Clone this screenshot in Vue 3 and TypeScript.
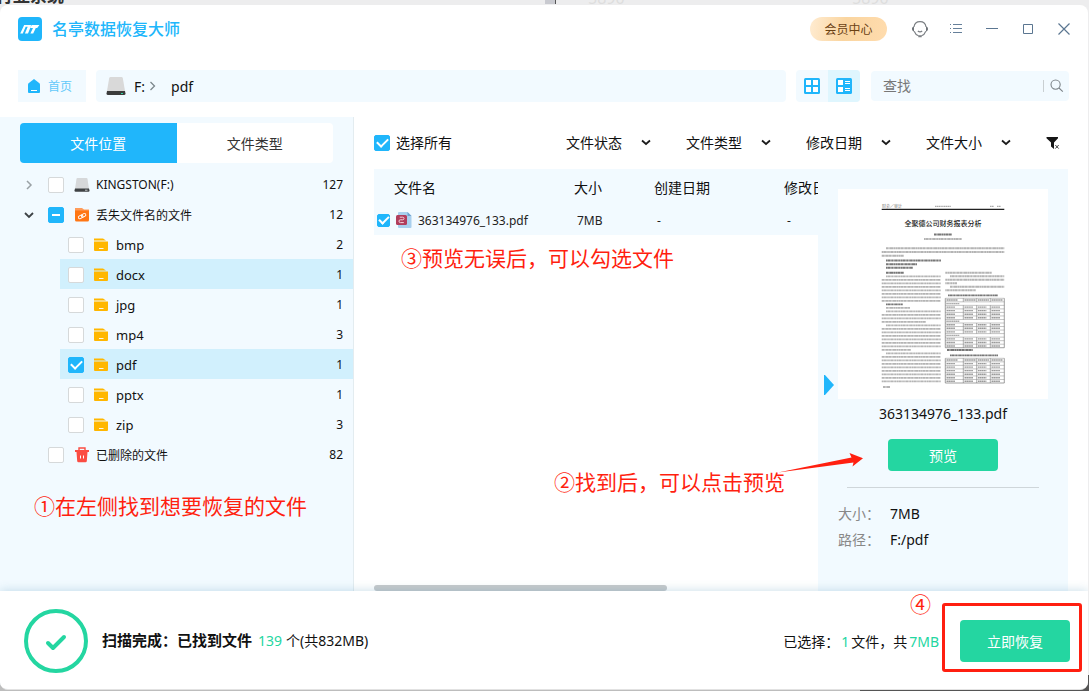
<script setup lang="ts">
import { ref } from 'vue'

interface TreeNode {
  name: string
  count: number
  checked: boolean
  highlighted?: boolean
}

const folders = ref<TreeNode[]>([
  { name: 'bmp', count: 2, checked: false },
  { name: 'docx', count: 1, checked: false, highlighted: true },
  { name: 'jpg', count: 1, checked: false },
  { name: 'mp4', count: 3, checked: false },
  { name: 'pdf', count: 1, checked: true, highlighted: true },
  { name: 'pptx', count: 1, checked: false },
  { name: 'zip', count: 3, checked: false },
])

const filters: string[] = ['文件状态', '文件类型', '修改日期', '文件大小']
const selectAll = ref(true)
const fileChecked = ref(true)
const driveChecked = ref(false)
const deletedChecked = ref(false)
const query = ref('')

interface Line {
  x1: number
  x2: number
  y: number
  strong?: boolean
}

const colLeft = 43.7
const colMid = 102.7
const colRight = 107.3
const colEnd = 166.3

const textLines: Line[] = [
  { x1: 96, x2: 114, y: 45.5, strong: true },
  { x1: 86, x2: 124, y: 50 },
  { x1: 48, x2: colEnd, y: 59.3 },
  { x1: colLeft, x2: colEnd, y: 63 },
  { x1: colLeft, x2: 66, y: 66.7 },
  { x1: 48, x2: 103, y: 71.5, strong: true },
  { x1: 48, x2: 79, y: 75.3, strong: true },
  { x1: 48, x2: 75, y: 78.7, strong: true },
  { x1: 48, x2: 66, y: 83.7, strong: true },
  { x1: 110, x2: 160, y: 106.4, strong: true },
  { x1: 109, x2: 135, y: 161, strong: true },
  { x1: 112, x2: 160, y: 166.4, strong: true },
  { x1: 45, x2: 52, y: 198 },
]

const indented = [0, 9, 10, 14, 22]
for (let i = 0; i < 31; i++) {
  const heading = i === 8
  const start = indented.includes(i) || heading ? 48 : colLeft
  const end = heading ? 65 : i === 9 ? 72 : i === 21 ? 73 : i === 13 ? 88 : colMid
  textLines.push({ x1: start, x2: end, y: 87.4 + i * 3.5, strong: heading })
}
const rightEnds = [154, colEnd, colEnd, 119, colEnd, 138]
rightEnds.forEach((end, i) => {
  textLines.push({ x1: i === 1 || i === 4 ? 112 : colRight, x2: end, y: 83.7 + i * 3.5 })
})

interface Grid {
  top: number
  rows: number
  spans: number[]
}
const grids: Grid[] = [
  { top: 109.3, rows: 14, spans: [1, 6, 10] },
  { top: 169.3, rows: 7, spans: [] },
]
const cellStarts = [107.3, 125.3, 138.7, 152.3]
const rowStep = 3.53
</script>

<template>
  <div class="desktop">
    <div class="backdrop" aria-hidden="true">
      <span class="back-left">行亚系统 —</span>
      <span class="back-bar"></span>
      <span class="back-num">5890</span>
      <span class="back-num far">5890</span>
    </div>

    <div class="window">
      <header class="titlebar">
        <svg class="logo" viewBox="0 0 24 24" width="24" height="24">
          <rect width="24" height="24" rx="4" fill="#20b6fb" />
          <path d="M2.200 16.500 6.200 8h2.200L4.800 16.500zM8.300 8h4.200q.8 0 .5.900L10 16.500H6.900L9.700 9.800H7.600zM13.600 8h7.800l-2.200 3h-1.400l-2.600 5.500h-2.800L15 11h-2.600z" fill="#fff" />
        </svg>
        <h1>名亭数据恢复大师</h1>
        <button class="member" type="button">会员中心</button>
        <nav class="win-tools">
          <button type="button" aria-label="客服">
            <svg width="18" height="18" viewBox="0 0 18 18" fill="none" stroke="#7b7f83" stroke-width="1.100">
              <path d="M3 7C3.400 3.500 5.600 1.600 9 1.600S14.600 3.500 15 7M3.200 11.200c.7 2 2.100 3.700 4.300 4.600M14.800 11.200c-.7 2-2.100 3.700-4.300 4.600M6.800 11c1.200 1 3.200 1 4.400 0" />
              <path d="M3 6.500v5C1.700 11.200 1 10.300 1 9s.7-2.200 2-2.500zM15 6.500v5c1.300-.3 2-1.200 2-2.500s-.7-2.200-2-2.500z" fill="#6f7479" stroke="none" />
              <path d="M7.300 16.200h3.400" stroke-width="2" />
            </svg>
          </button>
          <button type="button" aria-label="菜单">
            <svg width="18" height="18" viewBox="0 0 18 18" stroke="#66809a" stroke-width="1">
              <path d="M6 4.500h9M6 8.500h9M6 12.500h9M3 4.500h1M3 8.500h1M3 12.500h1" />
            </svg>
          </button>
          <button type="button" aria-label="最小化">
            <svg width="18" height="18" viewBox="0 0 18 18" stroke="#5b7691"><path d="M3 8.500h12" /></svg>
          </button>
          <button type="button" aria-label="最大化">
            <svg width="18" height="18" viewBox="0 0 18 18" stroke="#5b7691" fill="none"><path d="M4.500 4.500h9v9h-9z" /></svg>
          </button>
          <button type="button" aria-label="关闭">
            <svg width="18" height="18" viewBox="0 0 18 18" stroke="#5b7691" stroke-width="1.200"><path d="M3.500 3.500l11 11M14.500 3.500l-11 11" /></svg>
          </button>
        </nav>
      </header>

      <div class="toolbar">
        <a class="home" href="#">
          <svg width="12" height="14" viewBox="0 0 12 14">
            <path d="M6 0 11.400 4.200Q12 4.700 12 5.500V13q0 1-1 1H1q-1 0-1-1V5.500Q0 4.700.6 4.200z" fill="#20b6fb" />
            <path d="M3 11.500h6" stroke="#fff" />
          </svg>
          <span>首页</span>
        </a>
        <div class="path">
          <svg width="20" height="18" viewBox="0 0 20 18">
            <path d="M4.500 0h11q1 0 1.300 1L19 14H1L3.200 1Q3.500 0 4.500 0z" fill="#d9d9d9" />
            <path d="M1 14h18l.5 2.500q0 1.500-1.500 1.500H2q-1.500 0-1.500-1.500z" fill="#3c3c3c" />
            <path d="M15 16.500h2" stroke="#2ed6a0" />
          </svg>
          <a href="#">F:</a>
          <svg class="sep" width="8" height="10" viewBox="0 0 8 10" fill="none" stroke="#7c868c" stroke-width="1.300"><path d="M1.500 1l4 4-4 4" /></svg>
          <a href="#">pdf</a>
        </div>
        <div class="views">
          <button type="button" aria-label="网格视图">
            <svg width="16" height="16" viewBox="0 0 16 16">
              <rect width="16" height="16" rx="1.500" fill="#20b6fb" />
              <path d="M2 2h5v5H2zM9 2h5v5H9zM2 9h5v5H2zM9 9h5v5H9z" fill="#fff" />
            </svg>
          </button>
          <button class="on" type="button" aria-label="列表视图">
            <svg width="16" height="16" viewBox="0 0 16 16">
              <rect width="16" height="16" rx="1.500" fill="#20b6fb" />
              <path d="M2 2h5v5H2zM2 9h5v5H2zM9 3h5v1H9zM9 5h5v1H9zM9 10h5v1H9zM9 12h5v1H9z" fill="#fff" />
            </svg>
          </button>
        </div>
        <div class="search">
          <input v-model="query" type="text" placeholder="查找" aria-label="查找" />
          <button type="button" aria-label="搜索">
            <svg width="14" height="14" viewBox="0 0 14 14" fill="none" stroke="#7d8489" stroke-width="1.100"><circle cx="5.600" cy="5.600" r="4.600" /><path d="M9 9l3.800 3.600" /></svg>
          </button>
        </div>
      </div>

      <div class="body">
        <aside class="sidebar">
          <div class="tabs">
            <button class="active" type="button">文件位置</button>
            <button type="button">文件类型</button>
          </div>
          <ul class="tree">
            <li class="row">
              <svg class="twist" width="10" height="10" viewBox="0 0 10 10" fill="none" stroke="#9aa1a5" stroke-width="1.500"><path d="M3 1l4 4-4 4" /></svg>
              <input id="node-drive" v-model="driveChecked" type="checkbox" />
              <svg class="icon" width="16" height="16" viewBox="0 0 16 16">
                <path d="M3.500 1h9q.8 0 1 .8L15 12H1L2.500 1.800q.2-.8 1-.8z" fill="#d6d8da" />
                <path d="M1 11.500h14l.5 2q0 1.200-1 1.200h-13q-1 0-1-1.200z" fill="#3f4244" />
                <path d="M11 13.200h2.500" stroke="#c8cccc" />
              </svg>
              <label class="latin" for="node-drive">KINGSTON(F:)</label>
              <span class="count">127</span>
            </li>
            <li class="row">
              <svg class="twist" width="10" height="10" viewBox="0 0 10 10" fill="none" stroke="#3d4245" stroke-width="1.800"><path d="M1 3l4 4 4-4" /></svg>
              <input id="node-lost" type="checkbox" :indeterminate="true" />
              <svg class="icon" width="16" height="16" viewBox="0 0 16 16">
                <path d="M1 1h7l2 1.500h5V4H1z" fill="#ff9c5a" />
                <path d="M1 3.500h14V13q0 1.500-1.500 1.500h-11Q1 14.500 1 13z" fill="#ff7614" />
                <g fill="none" stroke="#fff" stroke-width=".9" transform="rotate(-28 8 9)"><rect x="4" y="7.700" width="4.800" height="2.800" rx="1.400" /><rect x="7.300" y="7.700" width="4.800" height="2.800" rx="1.400" /></g>
              </svg>
              <label for="node-lost">丢失文件名的文件</label>
              <span class="count">12</span>
            </li>
            <li v-for="f in folders" :key="f.name" class="row child" :class="{ lit: f.highlighted }">
              <input :id="'node-' + f.name" v-model="f.checked" type="checkbox" />
              <svg class="icon" width="16" height="16" viewBox="0 0 16 16">
                <path d="M1 1.500h9l3 2H1z" fill="#ffb700" />
                <path d="M1 4.500h14V13q0 1-1 1H2q-1 0-1-1z" fill="#ffb700" />
                <path d="M6 11.500h4.500" stroke="#fff" stroke-width=".9" />
              </svg>
              <label class="latin" :for="'node-' + f.name">{{ f.name }}</label>
              <span class="count">{{ f.count }}</span>
            </li>
            <li class="row">
              <span class="twist"></span>
              <input id="node-deleted" v-model="deletedChecked" type="checkbox" />
              <svg class="icon" width="16" height="16" viewBox="0 0 16 16">
                <path d="M5 3V1h6v2" fill="none" stroke="#fb4c42" stroke-width="1.400" />
                <path d="M1 3h14v2H1zM2.500 5h11l-.7 9q-.1 1.200-1.300 1.200h-7q-1.200 0-1.300-1.200z" fill="#fb4c42" />
                <path d="M6.500 8.500v3M9.500 8.500v3" stroke="#fff" />
              </svg>
              <label for="node-deleted">已删除的文件</label>
              <span class="count">82</span>
            </li>
          </ul>
        </aside>

        <main class="main">
          <div class="filterbar">
            <input id="select-all" v-model="selectAll" type="checkbox" />
            <label for="select-all">选择所有</label>
            <div class="filters">
              <div v-for="f in filters" :key="f" class="filter">
                <select :aria-label="f"><option>{{ f }}</option></select>
                <svg width="10" height="8" viewBox="0 0 10 8" fill="none" stroke="#1c1c1c" stroke-width="1.800"><path d="M1 1.500L5 5 9 1.500" /></svg>
              </div>
              <button type="button" aria-label="清除筛选">
                <svg width="14" height="14" viewBox="0 0 14 14">
                  <path d="M.5 1h11.500v1.200L8 6.500V13L5 10.500v-4L.5 2.200z" fill="#161616" />
                  <path d="M9.300 9l3.400 3.600M12.700 9l-3.400 3.600" stroke="#444" />
                </svg>
              </button>
            </div>
          </div>

          <div class="content">
            <div class="list">
              <table>
                <colgroup><col class="c-name" /><col class="c-size" /><col class="c-created" /><col class="c-modified" /></colgroup>
                <thead>
                  <tr><th>文件名</th><th>大小</th><th>创建日期</th><th>修改日期</th></tr>
                </thead>
                <tbody>
                  <tr>
                    <td>
                      <div class="file">
                        <input id="file-0" v-model="fileChecked" class="small" type="checkbox" />
                        <svg width="16" height="16" viewBox="0 0 16 16">
                          <path d="M3 0h8.500L15.500 4v11q0 1-1 1H3q-1 0-1-1V1q0-1 1-1z" fill="#a9d0ee" />
                          <path d="M11.500 0v4h4z" fill="#6fa3cf" />
                          <rect x="0" y="3" width="11" height="10" rx="1.500" fill="#b13d5c" />
                          <path d="M3.800 5.200h2.800q1.400 0 1.400 1.300T6.600 7.800H4.400Q3 7.800 3 9.200t1.400 1.400h3.400" fill="none" stroke="#f3d3dc" stroke-width="1" />
                        </svg>
                        <label for="file-0">363134976_133.pdf</label>
                      </div>
                    </td>
                    <td>7MB</td><td>-</td><td>-</td>
                  </tr>
                </tbody>
              </table>
              <div class="scroll"></div>
            </div>

            <section class="preview">
              <button class="collapse" type="button" aria-label="收起预览">
                <svg width="10" height="20" viewBox="0 0 10 20"><path d="M0 0h1l9 10-9 10H0z" fill="#20b6fb" /></svg>
              </button>
              <svg class="thumb" viewBox="0 0 210 210">
                <rect width="210" height="210" fill="#fff" />
                <text x="44" y="19" class="tiny">财会／审计</text>
                <path d="M97 17.300h16M152 17.300h4M159 17.300h4" stroke="#aaa" stroke-width="1.200" stroke-dasharray="1.400 .4" />
                <path d="M43.700 20.400h122.600" stroke="#222" stroke-width="1.200" />
                <text x="105" y="37" text-anchor="middle" class="doc-title">全聚德公司财务报表分析</text>
                <path
                  v-for="(l, i) in textLines"
                  :key="i"
                  :d="`M${l.x1} ${l.y}H${l.x2}`"
                  :stroke="l.strong ? '#777' : '#b4b4b4'"
                  stroke-width="1.900"
                  :stroke-dasharray="i % 2 ? '1.300 .25 2.700 .3 .8 .2 1.600 .35' : '2.300 .3 1.100 .25 3.100 .3'"
                />
                <g v-for="(g, gi) in grids" :key="'g' + gi">
                  <template v-for="r in g.rows" :key="r">
                    <path :d="`M107.300 ${g.top + (r - 1) * rowStep}H166.300`" stroke="#888" stroke-width=".5" />
                    <template v-if="g.spans.includes(r - 1)">
                      <path :d="`M108.300 ${g.top + (r - 0.5) * rowStep}h13`" stroke="#aaa" stroke-width="1.400" stroke-dasharray="1.600 .3" />
                    </template>
                    <template v-else>
                      <path :d="`M125.300 ${g.top + (r - 1) * rowStep}v${rowStep}M138.700 ${g.top + (r - 1) * rowStep}v${rowStep}M152.300 ${g.top + (r - 1) * rowStep}v${rowStep}`" stroke="#777" stroke-width=".6" />
                      <path v-for="c in cellStarts" :key="c" :d="`M${c + 1.200} ${g.top + (r - 0.5) * rowStep}h${r === 1 ? 11 : 8.500}`" stroke="#999" stroke-width="1.400" stroke-dasharray="1.600 .3" />
                    </template>
                  </template>
                  <path :d="`M107.300 ${g.top}V${g.top + g.rows * rowStep}H166.300V${g.top}`" fill="none" stroke="#777" stroke-width=".7" />
                </g>
              </svg>
              <p class="fname">363134976_133.pdf</p>
              <button class="go" type="button">预览</button>
              <hr />
              <dl>
                <dt>大小：</dt><dd>7MB</dd>
                <dt>路径：</dt><dd>F:/pdf</dd>
              </dl>
            </section>
          </div>
        </main>
      </div>

      <footer class="footer">
        <svg width="64" height="64" viewBox="0 0 64 64" fill="none" stroke="#24d6a1">
          <circle cx="32" cy="32" r="30" stroke-width="4" />
          <path d="M24 34l5 5L40 28" stroke-width="4" stroke-linecap="round" stroke-linejoin="round" />
        </svg>
        <p class="status"><b>扫描完成：已找到文件</b><em>139</em><span>个(共832MB)</span></p>
        <p class="chosen">已选择：<em class="n">1</em>文件，共<em>7MB</em></p>
        <div class="recover-wrap">
          <button class="recover" type="button">立即恢复</button>
          <span class="frame"></span>
          <span class="note note4">④</span>
        </div>
      </footer>

      <span class="note note1">①在左侧找到想要恢复的文件</span>
      <span class="note note2">②找到后，可以点击预览</span>
      <span class="note note3">③预览无误后，可以勾选文件</span>
      <svg class="arrow" width="86" height="24" viewBox="0 0 86 24"><path d="M0 20.500 73.500 5.500 71.500 1 85 6.300 74.500 14.500 75.500 10.500z" fill="#ff1f10" /></svg>
    </div>
  </div>
</template>

<style>
html,
body {
  margin: 0;
  background: #c9cacb;
}
</style>

<style scoped>
.desktop {
  position: relative;
  box-sizing: border-box;
  min-height: 100vh;
  padding: 5px 1px 1px 0;
  display: flex;
  flex-direction: column;
  background: linear-gradient(90deg, #bdbdbd 79%, #555 79%);
  font-family: "Noto Sans", "Noto Sans CJK SC", sans-serif;
  font-size: 14px;
  color: #111;
}
.desktop * {
  box-sizing: border-box;
}
button,
input,
select {
  font: inherit;
  color: inherit;
  margin: 0;
}
button {
  border: 0;
  padding: 0;
  background: none;
  display: inline-flex;
  align-items: center;
  justify-content: center;
}
a {
  color: inherit;
  text-decoration: none;
}
p,
h1,
ul,
dl,
dd {
  margin: 0;
  padding: 0;
}
em {
  font-style: normal;
  color: #24d6a1;
}
svg {
  flex: none;
  display: block;
}
.backdrop {
  position: absolute;
  inset: 0 0 16px 0;
  overflow: hidden;
  background: #ededee;
}
.back-left,
.back-num,
.back-bar {
  position: absolute;
}
.back-left {
  left: -4px;
  top: -14px;
  font-size: 17px;
  line-height: 20px;
  font-weight: 700;
  color: #333;
}
.back-bar {
  left: 50%;
  width: 11px;
  height: 4px;
  background: #c9cad0;
  border-right: 1px solid #555;
}
.back-num {
  left: 588px;
  top: -12px;
  font-size: 16px;
  line-height: 20px;
  color: #ddd;
}
.back-num.far {
  left: 852px;
}
.window {
  position: relative;
  flex: 1;
  display: flex;
  flex-direction: column;
  background: #fff;
  border-bottom: 1px solid #e2e2e2;
  border-radius: 8px;
  overflow: hidden;
}
.titlebar {
  display: flex;
  align-items: center;
  height: 48px;
  padding: 0 15px 0 18px;
}
h1 {
  margin-left: 10px;
  font-size: 16px;
  line-height: 24px;
  font-weight: 500;
  color: #20b6fb;
}
.member {
  width: 77px;
  height: 24px;
  margin-left: auto;
  border-radius: 12px;
  background: linear-gradient(100deg, #ffecd2, #fad5a0 45%, #ffdcae);
  color: #6b4113;
  font-size: 12px;
}
.win-tools {
  display: flex;
  gap: 18px;
  margin-left: 24px;
}
.toolbar {
  display: flex;
  align-items: center;
  height: 32px;
  margin: 17px 19px 15px 18px;
}
.home {
  display: flex;
  align-items: center;
  gap: 8px;
  width: 68px;
  height: 32px;
  padding-left: 10px;
  background: #f2faff;
  color: #63c9fa;
  font-size: 12px;
}
.path {
  flex: 1;
  display: flex;
  align-items: center;
  height: 32px;
  margin-left: 10px;
  padding-left: 10px;
  border-radius: 4px;
  background: #f2faff;
}
.path a {
  margin-left: 8px;
}
.sep {
  margin: 0 6px 0 4px;
}
.views {
  display: flex;
  margin-left: 10px;
  border-radius: 4px;
  overflow: hidden;
  background: #f2faff;
}
.views button {
  width: 32px;
  height: 32px;
}
.views .on {
  background: #dff6fe;
}
.search {
  display: flex;
  align-items: center;
  width: 198px;
  height: 30px;
  margin-left: 11px;
  border-radius: 4px;
  background: #f2faff;
}
.search input {
  flex: 1;
  min-width: 0;
  padding: 0 12px 2px;
  border: 0;
  outline: 0;
  background: none;
}
.search input::placeholder {
  color: #777;
  opacity: 1;
}
.search button {
  width: 26px;
  height: 12px;
  border-left: 1px solid #c9cfd2;
}
.body {
  flex: 1;
  display: flex;
}
.sidebar {
  width: 354px;
  padding-top: 6px;
  background: #f2faff;
  border-right: 1px solid #e3ecf0;
}
.tabs {
  display: flex;
  height: 40px;
  margin: 0 20px;
  border-radius: 4px;
  overflow: hidden;
}
.tabs button {
  flex: 1;
  background: #fff;
  color: #333;
}
.tabs .active {
  background: #20b6fb;
  color: #fff;
}
.tree {
  margin-top: 6px;
  list-style: none;
}
.row {
  display: flex;
  align-items: center;
  height: 30px;
  padding: 1px 10px 0 24px;
  font-size: 12px;
}
.child {
  margin-left: 60px;
  padding-left: 8px;
}
.lit {
  background: #d1f0fd;
}
.twist {
  width: 10px;
  margin-right: 14px;
}
.icon {
  margin: 0 6px 0 10px;
}
.child .icon {
  margin-left: 9px;
  margin-right: 7px;
}
.row .count {
  margin-left: auto;
}
.child .latin {
  font-size: 13px;
}
input[type="checkbox"] {
  appearance: none;
  flex: none;
  display: grid;
  place-content: center;
  width: 16px;
  height: 16px;
  border: 1px solid #d6d9da;
  border-radius: 2px;
  background: #fff;
}
input[type="checkbox"]:checked,
input[type="checkbox"]:indeterminate {
  border-color: #20b6fb;
  background: #20b6fb;
}
input[type="checkbox"]:checked::after {
  content: "";
  width: 9px;
  height: 5px;
  margin-bottom: 3px;
  border: solid #fff;
  border-width: 0 0 2px 2px;
  transform: rotate(-45deg);
}
input[type="checkbox"]:indeterminate::after {
  content: "";
  width: 8px;
  height: 2px;
  background: #fff;
}
input[type="checkbox"].small {
  width: 13px;
  height: 13px;
}
input[type="checkbox"].small::after {
  width: 8px;
  height: 4px;
}
.main {
  flex: 1;
  min-width: 0;
  display: flex;
  flex-direction: column;
  padding: 0 20px;
}
.filterbar {
  display: flex;
  align-items: center;
  height: 52px;
}
.filterbar > label {
  margin-left: 6px;
  padding-bottom: 2px;
}
.filters {
  display: flex;
  align-items: center;
  margin-left: auto;
  padding-right: 8px;
}
.filter {
  display: flex;
  align-items: center;
  width: 120px;
}
.filter select {
  width: 75px;
  padding: 0 0 2px;
  border: 0;
  outline: 0;
  appearance: none;
  background: none;
}
.content {
  flex: 1;
  display: flex;
}
.list {
  flex: 1;
  min-width: 0;
  display: flex;
  flex-direction: column;
  overflow: hidden;
}
table {
  width: 560px;
  table-layout: fixed;
  border-collapse: collapse;
  background: #f2faff;
}
.c-name {
  width: 200px;
}
.c-size {
  width: 80px;
}
.c-created {
  width: 130px;
}
.c-modified {
  width: 150px;
}
th {
  height: 36px;
  padding: 0;
  text-align: left;
  font-weight: 400;
}
th:first-child {
  padding-left: 20px;
}
td {
  height: 30px;
  padding: 0 0 0 3px;
  font-size: 12px;
  color: #222;
}
.file {
  display: flex;
  align-items: center;
}
.file svg {
  margin: 0 6px;
}
.scroll {
  width: 66%;
  height: 6px;
  margin-top: auto;
  border-radius: 3px;
  background: #c6c9cb;
}
.preview {
  position: relative;
  width: 250px;
  padding: 20px 20px 0;
  display: flex;
  flex-direction: column;
  align-items: center;
  background: #f2faff;
}
.collapse {
  position: absolute;
  left: 6px;
  top: 206px;
}
.thumb {
  width: 100%;
}
.tiny {
  font-size: 4px;
  fill: #777;
}
.doc-title {
  font-size: 7px;
  font-weight: 500;
  fill: #222;
}
.fname {
  margin-top: 5px;
  line-height: 20px;
}
.go {
  width: 110px;
  height: 32px;
  margin-top: 15px;
  border-radius: 4px;
  background: #24d6a1;
  color: #fff;
}
hr {
  width: 192px;
  height: 1px;
  margin: 16px 0 13px;
  border: 0;
  background: #cfd6da;
}
dl {
  align-self: stretch;
  display: grid;
  grid-template-columns: 52px 1fr;
  line-height: 26px;
}
dt {
  color: #888;
}
.footer {
  position: relative;
  display: flex;
  align-items: center;
  height: 98px;
  padding: 2px 18px 0 24px;
  background: #fff;
  box-shadow: 0 0 10px rgba(70, 140, 175, 0.3);
}
.status {
  display: flex;
  align-items: baseline;
  margin-left: 14px;
  padding-bottom: 3px;
}
.status b {
  font-size: 15px;
}
.status em {
  margin: 0 4px 0 6px;
}
.chosen {
  margin-left: auto;
}
.chosen .n {
  margin: 0 2px 0 2px;
}
.chosen em {
  margin-left: 2px;
}
.recover-wrap {
  position: relative;
  margin-left: 21px;
}
.recover {
  width: 110px;
  height: 42px;
  border-radius: 4px;
  background: #24d6a1;
  color: #fff;
}
.frame {
  position: absolute;
  inset: -17px -12px -10px -18px;
  border: 3px solid #ff1f10;
  border-radius: 3px;
}
.note {
  position: absolute;
  font-size: 21px;
  line-height: 30px;
  color: #ff1f10;
  white-space: nowrap;
}
.note1 {
  left: 34px;
  top: 486px;
}
.note2 {
  left: 554px;
  top: 462px;
}
.note3 {
  left: 401px;
  top: 238px;
}
.note4 {
  left: -50px;
  top: -31px;
}
.arrow {
  position: absolute;
  left: 778px;
  top: 447px;
}
</style>
